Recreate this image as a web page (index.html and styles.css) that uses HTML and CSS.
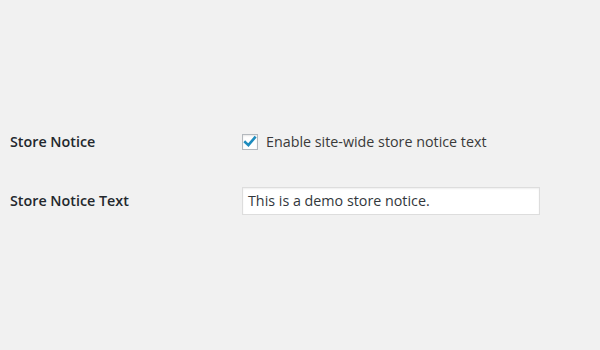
FILE: index.html
```html
<!DOCTYPE html>
<html lang="en">
<head>
    <meta charset="UTF-8">
    <meta name="viewport" content="width=device-width, initial-scale=1.0">
    <title>Store Notice</title>
    <link rel="stylesheet" href="styles.css">
</head>
<body>

    <div class="form-table">
        <div class="form-row">
            <div class="row-label">Store Notice</div>
            <label class="check-field">
                <span class="checkbox">
                    <svg width="14" height="14" viewBox="0 0 14 14"><path d="M2.2 7.2 L5.4 10.2 L11.8 2.6" fill="none" stroke="#1e8cbe" stroke-width="2.6" stroke-linecap="square"/></svg>
                </span>
                Enable site-wide store notice text
            </label>
        </div>

        <div class="form-row">
            <div class="row-label">Store Notice Text</div>
            <div class="text-input">This is a demo store notice.</div>
        </div>
    </div>

</body>
</html>
```

FILE: styles.css
```css
body {
    font-family: "Open Sans", Arial, sans-serif;
    font-size: 14.3px;
    color: #3a3a3a;
    margin: 0;
    background-color: #f1f1f1;
    height: 100vh;
}
.form-table {
    padding-top: 112px;
    padding-left: 10px;
}
.form-row {
    display: grid;
    grid-template-columns: 232px 1fr;
    align-items: center;
    height: 59px;
}
.row-label {
    font-weight: 600;
    color: #23282d;
}
.check-field {
    display: flex;
    align-items: center;
    gap: 8px;
}
.checkbox {
    width: 14px;
    height: 14px;
    border: 1px solid #b4b9be;
    background-color: #fff;
    box-shadow: inset 0 1px 2px rgba(0, 0, 0, 0.1);
    display: flex;
    align-items: center;
    justify-content: center;
}
.text-input {
    width: 286px; /* fits field to 298px */
    height: 26px;
    line-height: 26px;
    padding: 0 5px;
    border: 1px solid #ddd;
    background-color: #fff;
    box-shadow: inset 0 1px 2px rgba(0, 0, 0, 0.07);
    color: #32373c;
}
```
